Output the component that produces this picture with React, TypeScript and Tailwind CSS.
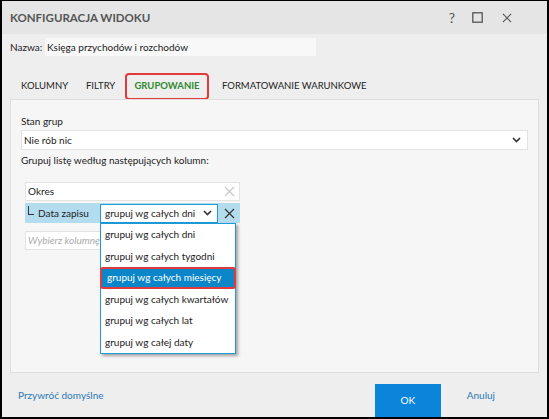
import React from 'react'

const options = [
  'grupuj wg całych dni',
  'grupuj wg całych tygodni',
  'grupuj wg całych miesięcy',
  'grupuj wg całych kwartałów',
  'grupuj wg całych lat',
  'grupuj wg całej daty',
]

const font = { fontFamily: 'Lato, "Open Sans", sans-serif' }

function Chevron({ className = '' }: { className?: string }) {
  return (
    <svg width="9" height="6" viewBox="0 0 9 6" className={className}>
      <path d="M1 1 L4.5 4.5 L8 1" fill="none" stroke="#333" strokeWidth="1.6" />
    </svg>
  )
}

function Cross({ color, size = 11 }: { color: string; size?: number }) {
  return (
    <svg width={size} height={size} viewBox="0 0 11 11">
      <path d="M1 1 L10 10 M10 1 L1 10" stroke={color} strokeWidth="1.2" />
    </svg>
  )
}

export default function App() {
  return (
    <div
      style={font}
      className="w-[549px] h-[419px] flex flex-col bg-[#eeeeee] border-x-2 border-b-2 border-t border-black text-[#222] text-[10px] relative overflow-hidden"
    >
      {/* Title bar */}
      <div className="h-[33px] flex items-center justify-between pl-[8px] pr-[35px] bg-[#e5e5e5]">
        <span className="text-[11.5px] font-bold text-[#555]">KONFIGURACJA WIDOKU</span>
        <div className="flex items-center">
          <span className="text-[14px] text-[#555] leading-none">?</span>
          <svg width="11" height="11" viewBox="0 0 11 11" className="ml-[17px]">
            <rect x="0.8" y="0.8" width="9.4" height="9.4" fill="none" stroke="#555" strokeWidth="1.3" />
          </svg>
          <span className="ml-[19px]">
            <Cross color="#555" size={10} />
          </span>
        </div>
      </div>

      {/* Name */}
      <div className="flex items-center mt-[4px] pl-[8px] h-[18px]">
        <span className="w-[35px]">Nazwa:</span>
        <div className="w-[271px] h-[18px] bg-[#f8f8f8] flex items-center pl-[2px]">
          Księga przychodów i rozchodów
        </div>
      </div>

      {/* Tabs */}
      <div className="flex items-end mt-[16px] pl-[19px] h-[27px] text-[9.5px]">
        <span className="pb-[6px] w-[65px]">KOLUMNY</span>
        <span className="pb-[6px] w-[39px]">FILTRY</span>
        <span className="h-[27px] w-[84px] mb-[-1px] border-2 border-[#e23a3a] rounded-[4px] flex items-center justify-center font-bold text-[#2e8a2e]">
          GRUPOWANIE
        </span>
        <span className="pb-[6px] ml-[13px]">FORMATOWANIE WARUNKOWE</span>
      </div>

      {/* Panel */}
      <div className="mx-[8px] h-[274px] border border-[#dedede] bg-[#f6f6f6] px-[10px] pt-[14px]">
        <div className="h-[14px] flex items-center">Stan grup</div>
        <div className="mt-[2px] h-[20px] bg-white border border-[#e2e2e2] flex items-center justify-between pl-[2px] pr-[6px]">
          <span>Nie rób nic</span>
          <Chevron />
        </div>
        <div className="mt-[2px] h-[16px] flex items-center">Grupuj listę według następujących kolumn:</div>

        <div className="mt-[14px] ml-[4px] w-[215px] flex flex-col gap-[2px]">
          <div className="h-[19px] bg-white border border-[#e3e3e3] flex items-center justify-between pl-[2px] pr-[4px]">
            <span>Okres</span>
            <Cross color="#c8c8c8" />
          </div>
          <div className="h-[20px] bg-[#b3dcef] flex items-center pl-[2px] pr-[5px]">
            <span className="w-[73px] flex items-center">
              <span className="w-[6px] h-[9px] border-l border-b border-[#333] mt-[-5px] mr-[4px] ml-[1px]" />
              Data zapisu
            </span>
            <div className="w-[118px] h-[19px] bg-white border border-[#1e9ad6] flex items-center justify-between pl-[4px] pr-[5px] whitespace-nowrap">
              <span>grupuj wg całych dni</span>
              <Chevron />
            </div>
            <span className="ml-auto">
              <Cross color="#333" />
            </span>
          </div>
          <div className="mt-[6px] w-[120px] h-[19px] bg-white border border-[#e3e3e3] flex items-center pl-[2px] italic text-[#aaa]">
            Wybierz kolumnę
          </div>
        </div>
      </div>

      {/* Footer */}
      <div className="flex-1 flex items-end pl-[16px] pr-[52px]">
        <span className="mb-[14px] text-[#2b79b6]">Przywróć domyślne</span>
        <div className="ml-auto w-[66px] h-[33px] bg-[#0a85d9] text-white flex items-center justify-center">OK</div>
        <span className="ml-[26px] mb-[14px] text-[#2b79b6]">Anuluj</span>
      </div>

      {/* Open dropdown */}
      <div className="absolute left-[98px] top-[222px] w-[136px] bg-white border border-[#1e9ad6] shadow-[2px_2px_3px_rgba(0,0,0,0.35)] whitespace-nowrap">
        {options.map((o, i) =>
          i === 2 ? (
            <div
              key={o}
              className="h-[21.5px] mx-[-1px] flex items-center pl-[5px] bg-[#0b86c8] text-white border-2 border-[#e23a3a] rounded-[3px]"
            >
              {o}
            </div>
          ) : (
            <div key={o} className="h-[21.5px] flex items-center pl-[4px]">
              {o}
            </div>
          ),
        )}
      </div>
    </div>
  )
}
